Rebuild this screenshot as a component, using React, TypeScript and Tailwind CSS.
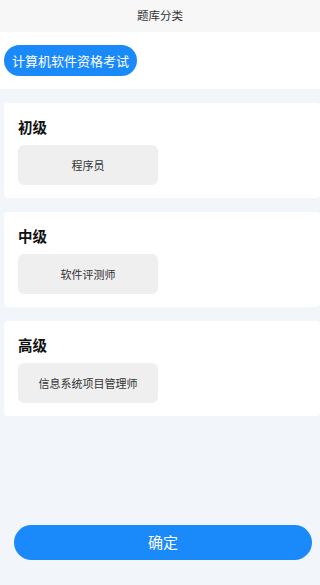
const levels = [
  { name: "初级", items: ["程序员"] },
  { name: "中级", items: ["软件评测师"] },
  { name: "高级", items: ["信息系统项目管理师"] },
];

export default function App() {
  return (
    <div
      className="flex h-[585px] w-[320px] flex-col overflow-hidden bg-[#f2f5f9]"
      style={{ fontFamily: '"Noto Sans CJK SC", "Noto Sans", sans-serif' }}
    >
      <div className="flex h-8 items-center justify-center bg-[#f7f7f7] text-[11.5px] text-[#333]">
        题库分类
      </div>

      <div className="bg-white px-1 py-[13px]">
        <button className="flex h-[31px] items-center rounded-full bg-[#1a8afa] px-[8px] text-[13px] text-white">
          计算机软件资格考试
        </button>
      </div>

      <div className="flex flex-col gap-[14px] pt-[14px]">
        {levels.map((level) => (
          <section
            key={level.name}
            className="ml-1 flex h-[95px] flex-col rounded-[4px] bg-white px-[14px] pt-[14px]"
          >
            <h3 className="text-[14.5px] font-bold leading-5 text-[#111]">
              {level.name}
            </h3>
            <div className="mt-2 flex gap-3">
              {level.items.map((item) => (
                <div
                  key={item}
                  className="flex h-10 w-[140px] items-center justify-center rounded-[6px] bg-[#efefef] text-[11px] text-[#333]"
                >
                  {item}
                </div>
              ))}
            </div>
          </section>
        ))}
      </div>

      <div className="mt-auto px-[14px] pb-[25px]">
        <button className="flex h-[35px] w-[298px] items-center justify-center rounded-full bg-[#1a8afa] text-[15px] text-white">
          确定
        </button>
      </div>
    </div>
  );
}
